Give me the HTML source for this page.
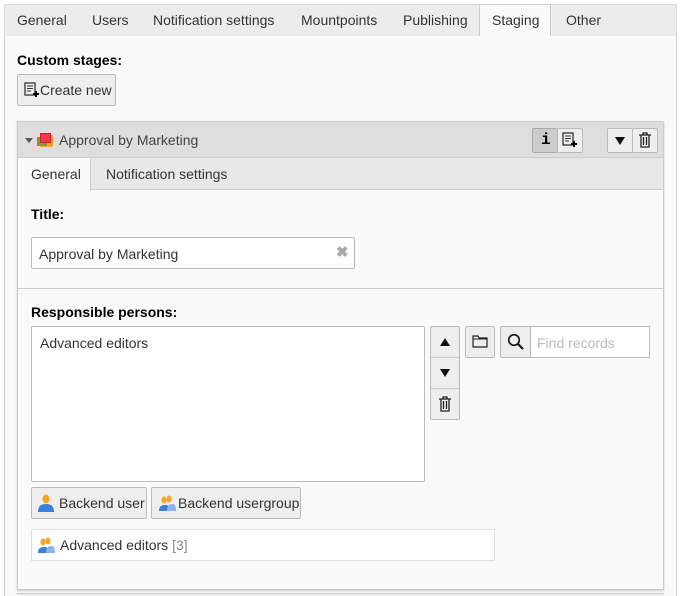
<!DOCTYPE html>
<html><head><meta charset="utf-8"><style>
*{box-sizing:border-box;margin:0;padding:0}
html,body{width:681px;height:596px;overflow:hidden}
body{background:#fff;font-family:"Liberation Sans",sans-serif;font-size:14px;color:#333;position:relative}
.a{position:absolute}
.tab{position:absolute;top:4px;height:32px;line-height:32px;font-size:14px;color:#333}
.btn{position:absolute;background:#eee;border:1px solid #bbb;border-radius:2px}
.b{font-weight:bold;color:#000}
svg{display:block}
</style></head><body>
<div class="a" style="left:4px;top:4px;width:673px;height:33px;background:#ececec;border:1px solid #ddd;border-bottom:1px solid #ccc"></div>
<div class="tab" style="left:17px">General</div>
<div class="tab" style="left:92px">Users</div>
<div class="tab" style="left:153px">Notification settings</div>
<div class="tab" style="left:301px">Mountpoints</div>
<div class="tab" style="left:403px">Publishing</div>
<div class="a" style="left:479px;top:4px;width:72px;height:33px;background:#fafafa;border:1px solid #ccc;border-bottom:none"></div>
<div class="tab" style="left:492px">Staging</div>
<div class="tab" style="left:566px">Other</div>
<div class="a" style="left:4px;top:36px;width:673px;height:560px;background:#fafafa;border:1px solid #ccc;border-top:none;border-bottom:none"></div>
<div class="a b" style="left:17px;top:52px">Custom stages:</div>
<div class="btn" style="left:17px;top:74px;width:99px;height:32px"></div>
<svg class="a" style="left:24px;top:82px" width="16" height="16" viewBox="0 0 16 16"><rect x="1" y="1" width="10" height="12" fill="none" stroke="#333" stroke-width="1.3"/><path d="M3 4h6M3 6.5h6M3 9h4" stroke="#333"/><path d="M12 9v6M9 12h6" stroke="#000" stroke-width="2"/></svg>
<div class="a" style="left:40px;top:82px">Create new</div>

<div class="a" style="left:17px;top:121px;width:647px;height:469px;background:#fafafa;border:1px solid #ccc;box-shadow:0 1px 2px rgba(0,0,0,.2)"></div>
<div class="a" style="left:18px;top:122px;width:645px;height:36px;background:#dedede;border-bottom:1px solid #ccc"></div>
<div class="a" style="left:25px;top:138px;width:0;height:0;border-left:4px solid transparent;border-right:4px solid transparent;border-top:5px solid #555"></div>
<div class="a" style="left:40px;top:135px;width:13px;height:12px;background:#ffa020"></div>
<div class="a" style="left:37px;top:137px;width:10px;height:9px;background:#6a3"></div>
<div class="a" style="left:40px;top:133px;width:11px;height:10px;background:#f35;border:1px solid #c22"></div>
<div class="a" style="left:59px;top:132px;color:#444">Approval by Marketing</div>
<div class="btn" style="left:532px;top:128px;width:26px;height:25px;background:#ccc;border-color:#aaa"></div>
<div class="a b" style="left:541px;top:131px;font-size:16px;font-family:'Liberation Mono',monospace">i</div>
<div class="btn" style="left:557px;top:128px;width:26px;height:25px"></div>
<svg class="a" style="left:562px;top:132px" width="16" height="16" viewBox="0 0 16 16"><rect x="1" y="1" width="10" height="12" fill="none" stroke="#333" stroke-width="1.3"/><path d="M3 4h6M3 6.5h6M3 9h4" stroke="#333"/><path d="M12 9v6M9 12h6" stroke="#000" stroke-width="2"/></svg>
<div class="btn" style="left:607px;top:128px;width:26px;height:25px"></div>
<div class="a" style="left:615px;top:137px;width:0;height:0;border-left:5px solid transparent;border-right:5px solid transparent;border-top:8px solid #111"></div>
<div class="btn" style="left:632px;top:128px;width:26px;height:25px"></div>
<svg class="a" style="left:638px;top:132px" width="14" height="16" viewBox="0 0 14 16"><path d="M1 3h12M5 3V1h4v2M3 3v12h8V3M5.5 5v8M8.5 5v8" fill="none" stroke="#222" stroke-width="1.3"/></svg>

<div class="a" style="left:18px;top:158px;width:645px;height:32px;background:#e8e8e8;border-bottom:1px solid #ccc"></div>
<div class="a" style="left:18px;top:158px;width:73px;height:33px;background:#fafafa;border-right:1px solid #ccc"></div>
<div class="a" style="left:31px;top:166px">General</div>
<div class="a" style="left:106px;top:166px">Notification settings</div>

<div class="a b" style="left:31px;top:206px">Title:</div>
<div class="a" style="left:31px;top:237px;width:324px;height:32px;background:#fff;border:1px solid #bbb;border-radius:2px"></div>
<div class="a" style="left:39px;top:246px">Approval by Marketing</div>
<div class="a" style="left:336px;top:243px;color:#aaa;font-size:15px;font-weight:bold">✖</div>
<div class="a" style="left:18px;top:288px;width:645px;height:1px;background:#ccc"></div>

<div class="a b" style="left:31px;top:304px">Responsible persons:</div>
<div class="a" style="left:31px;top:326px;width:394px;height:156px;background:#fff;border:1px solid #bbb;border-radius:2px"></div>
<div class="a" style="left:40px;top:335px">Advanced editors</div>
<div class="btn" style="left:430px;top:326px;width:30px;height:94px"></div>
<div class="a" style="left:431px;top:357px;width:28px;height:1px;background:#ccc"></div>
<div class="a" style="left:431px;top:388px;width:28px;height:1px;background:#ccc"></div>
<div class="a" style="left:440px;top:338px;width:0;height:0;border-left:5px solid transparent;border-right:5px solid transparent;border-bottom:8px solid #111"></div>
<div class="a" style="left:440px;top:369px;width:0;height:0;border-left:5px solid transparent;border-right:5px solid transparent;border-top:8px solid #111"></div>
<svg class="a" style="left:438px;top:396px" width="14" height="16" viewBox="0 0 14 16"><path d="M1 3h12M5 3V1h4v2M3 3v12h8V3M5.5 5v8M8.5 5v8" fill="none" stroke="#222" stroke-width="1.3"/></svg>
<div class="btn" style="left:465px;top:326px;width:30px;height:32px"></div>
<svg class="a" style="left:472px;top:334px" width="16" height="14" viewBox="0 0 16 14"><path d="M1 2h5l1 2h8v9H1z" fill="none" stroke="#222" stroke-width="1.2"/><path d="M1 5h14" stroke="#222"/></svg>
<div class="btn" style="left:500px;top:326px;width:31px;height:32px"></div>
<svg class="a" style="left:507px;top:333px" width="17" height="17" viewBox="0 0 17 17"><circle cx="7" cy="7" r="5.3" fill="none" stroke="#111" stroke-width="1.6"/><path d="M11 11l5 5" stroke="#111" stroke-width="2"/></svg>
<div class="a" style="left:530px;top:326px;width:120px;height:32px;background:#fff;border:1px solid #bbb"></div>
<div class="a" style="left:537px;top:335px;color:#bbb">Find records</div>

<div class="btn" style="left:31px;top:487px;width:116px;height:32px"></div>
<svg class="a" style="left:37px;top:494px" width="18" height="18" viewBox="0 0 18 18"><ellipse cx="9" cy="5" rx="3.5" ry="4.5" fill="#f5a623"/><path d="M1 18c0-6 3-8 8-8s8 2 8 8z" fill="#3b7fd9"/></svg>
<div class="a" style="left:59px;top:495px">Backend user</div>
<div class="btn" style="left:151px;top:487px;width:150px;height:32px"></div>
<svg class="a" style="left:158px;top:494px" width="18" height="18" viewBox="0 0 18 18"><ellipse cx="6" cy="6" rx="2.5" ry="3.5" fill="#f5a623"/><ellipse cx="11" cy="5" rx="2.5" ry="3.5" fill="#f5a623"/><path d="M1 17c0-5 3-6 6-6s5 1 5 6z" fill="#3b7fd9"/><path d="M9 17c0-5 2-7 5-7s4 2 4 7z" fill="#8ab4ee"/></svg>
<div class="a" style="left:178px;top:495px">Backend usergroup</div>

<div class="a" style="left:31px;top:529px;width:464px;height:32px;background:#fff;border:1px solid #ddd"></div>
<svg class="a" style="left:37px;top:536px" width="18" height="18" viewBox="0 0 18 18"><ellipse cx="6" cy="6" rx="2.5" ry="3.5" fill="#f5a623"/><ellipse cx="11" cy="5" rx="2.5" ry="3.5" fill="#f5a623"/><path d="M1 17c0-5 3-6 6-6s5 1 5 6z" fill="#3b7fd9"/><path d="M9 17c0-5 2-7 5-7s4 2 4 7z" fill="#8ab4ee"/></svg>
<div class="a" style="left:60px;top:537px">Advanced editors <span style="color:#888">[3]</span></div>
<div class="a" style="left:17px;top:593px;width:647px;height:3px;border-top:1px solid #ccc;background:#eee"></div>
</body></html>
